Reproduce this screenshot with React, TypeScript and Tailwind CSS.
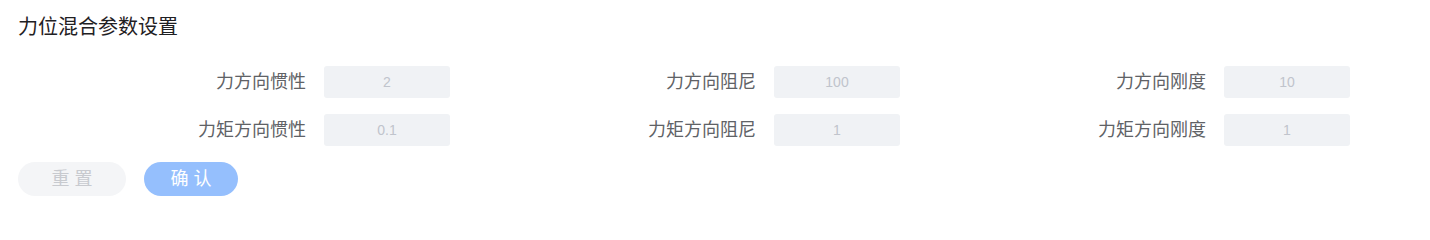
import { useState } from 'react';

const fields = [
  { label: '力方向惯性', value: '2' },
  { label: '力方向阻尼', value: '100' },
  { label: '力方向刚度', value: '10' },
  { label: '力矩方向惯性', value: '0.1' },
  { label: '力矩方向阻尼', value: '1' },
  { label: '力矩方向刚度', value: '1' },
];

function App() {
  const [values] = useState(fields);

  return (
    <div
      className="min-h-screen bg-white pl-[18px] pt-[13px]"
      style={{ fontFamily: '"Liberation Sans", "Noto Sans CJK SC", sans-serif' }}
    >
      <h2 className="text-[20px] leading-[28px] text-[#1f2023] font-normal">力位混合参数设置</h2>

      {/* 参数表单 */}
      <div className="mt-[25px] grid grid-cols-[450px_450px_450px] gap-y-[16px]">
        {values.map((f) => (
          <div key={f.label} className="flex items-center gap-[18px] h-[32px]">
            <label className="w-[288px] text-right text-[18px] text-[#606266]">{f.label}</label>
            <input
              disabled
              value={f.value}
              className="w-[126px] h-[32px] rounded-[3px] bg-[#f0f2f5] text-center text-[14px] text-[#c0c4cc] outline-none"
            />
          </div>
        ))}
      </div>

      {/* 按钮 */}
      <div className="mt-[16px] flex items-center gap-[18px]">
        <button
          disabled
          className="w-[108px] h-[34px] rounded-full bg-[#f4f5f7] pl-[5px] text-[18px] tracking-[5px] text-[#c8cacf]"
        >
          重置
        </button>
        <button
          disabled
          className="w-[94px] h-[34px] rounded-full bg-[#95bffd] pl-[5px] text-[18px] tracking-[5px] text-white"
        >
          确认
        </button>
      </div>
    </div>
  );
}

export default App;
